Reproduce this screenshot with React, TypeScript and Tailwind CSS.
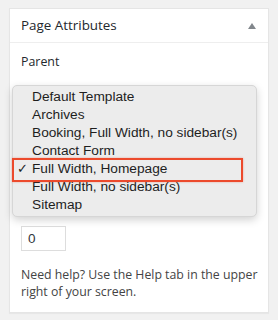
import React from 'react';

const templates = [
  'Default Template',
  'Archives',
  'Booking, Full Width, no sidebar(s)',
  'Contact Form',
  'Full Width, Homepage',
  'Full Width, no sidebar(s)',
  'Sitemap',
];

export default function App() {
  return (
    <div className="relative w-[278px] h-[320px] bg-[#f1f1f1] pt-[8px] pl-[9px] overflow-hidden">
      {/* Page Attributes box */}
      <div className="w-[260px] bg-white border border-[#e5e5e5] shadow-[0_1px_1px_rgba(0,0,0,0.04)] font-['Open_Sans',sans-serif] text-[#23282d]">
        <div className="h-[34px] flex items-center justify-between pl-[11px] pr-[12px] border-b border-[#eeeeee]">
          <h2 className="text-[13.4px] leading-none">Page Attributes</h2>
          <span className="w-0 h-0 border-l-[4px] border-r-[4px] border-b-[6px] border-l-transparent border-r-transparent border-b-[#82878c]" />
        </div>

        <div className="pl-[11px] pr-[6px] pt-[10px] pb-[12px]">
          <p className="text-[12.4px] leading-[18px]">Parent</p>
          {/* area covered by the open menu */}
          <div className="h-[155px]" />
          <input
            readOnly
            value="0"
            className="block w-[45px] h-[25px] border border-[#dddddd] px-[6px] text-[13.5px] text-[#32373c] font-['Liberation_Sans',sans-serif] outline-none"
          />
          <p className="mt-[15px] text-[12.3px] leading-[17px] text-[#444]">
            Need help? Use the Help tab in the upper right of your screen.
          </p>
        </div>
      </div>

      {/* Open template menu */}
      <div className="absolute left-[12px] top-[85px] w-[245px] h-[132px] rounded-[5px] bg-[#ececec] border border-[#d6d6d6] shadow-[0_3px_8px_rgba(0,0,0,0.18)] pt-[2px] font-['Liberation_Sans',sans-serif] text-[13.7px] leading-[18px] text-[#1e1e1e]">
        {templates.map((t) => (
          <div key={t} className="relative pl-[19px]">
            {t === 'Full Width, Homepage' && (
              <span className="absolute left-[4px] top-0 text-[13px]">✓</span>
            )}
            {t}
          </div>
        ))}
      </div>

      {/* highlight */}
      <div className="absolute left-[12px] top-[158px] w-[231px] h-[24px] border-[2px] border-[#ec4a2c] shadow-[0_0_2px_rgba(236,74,44,0.4)]" />
    </div>
  );
}
